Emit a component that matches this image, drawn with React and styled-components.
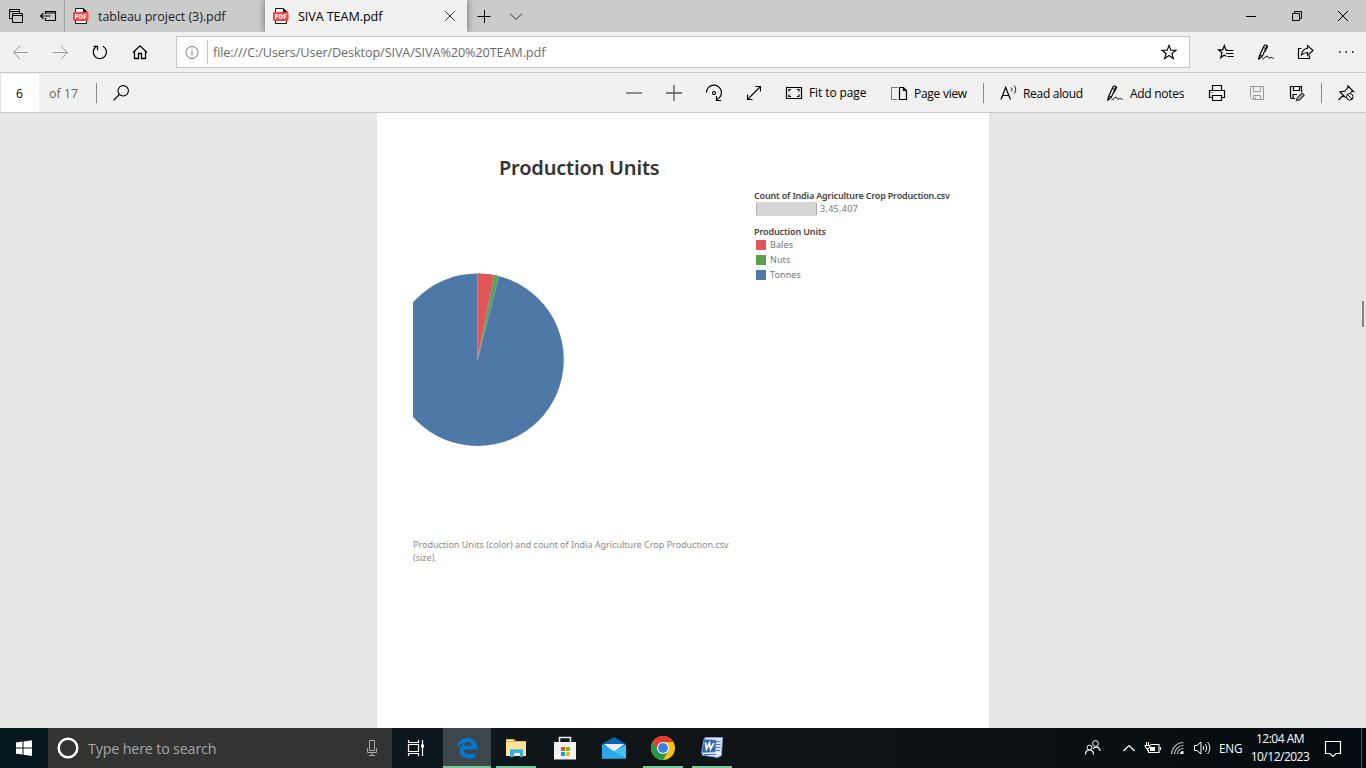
import React from "react";
import styled, { createGlobalStyle } from "styled-components";

const Global = createGlobalStyle`
  * { box-sizing: border-box; }
  body { margin: 0; overflow: hidden; background: #e6e6e6; }
`;

const Window = styled.div`
  width: 1366px;
  height: 768px;
  display: flex;
  flex-direction: column;
  font-family: "Open Sans", "Noto Sans", sans-serif;
  color: #000;
`;

const Icon = styled.svg`
  display: block;
  flex: none;
  width: ${(p) => p.$w || 20}px;
  height: ${(p) => p.$h || 20}px;
  fill: none;
  stroke: ${(p) => p.$color || "#000"};
  stroke-width: ${(p) => p.$stroke || 1};
`;

const Label = styled.span`
  flex: none;
  white-space: nowrap;
  font-size: ${(p) => p.$size || 12}px;
  letter-spacing: ${(p) => p.$track || 0}px;
  color: ${(p) => p.$color || "#000"};
  width: ${(p) => (p.$w ? `${p.$w}px` : "auto")};
  margin-left: ${(p) => p.$left || 0}px;
  padding-top: ${(p) => p.$drop || 0}px;
`;

const Slot = styled.div`
  flex: none;
  width: ${(p) => p.$w || 40}px;
  height: 100%;
  display: flex;
  align-items: center;
  justify-content: center;
`;

const Spacer = styled.div`
  flex: 1;
`;

const Rule = styled.div`
  flex: none;
  width: 1px;
  height: ${(p) => p.$h || 20}px;
  background: ${(p) => p.$color || "#999"};
`;

/* Tab strip */
const TabStrip = styled.div`
  height: 32px;
  flex: none;
  display: flex;
  background: #cbcbcb;
`;

const TabTools = styled.div`
  width: 65px;
  display: flex;
  align-items: center;
  gap: 12px;
  padding-left: 6px;
  border-right: 1px solid #a0a0a0;
`;

const Tab = styled.div`
  width: ${(p) => (p.$active ? 202 : 200)}px;
  display: flex;
  align-items: center;
  padding-left: 7px;
  gap: 8px;
  background: ${(p) => (p.$active ? "#f1f1f1" : "transparent")};
  box-shadow: ${(p) => (p.$active ? "0 0 7px rgba(0,0,0,.5)" : "none")};
  clip-path: ${(p) => (p.$active ? "inset(0 -10px 0 -10px)" : "none")};
`;

const NavBar = styled.div`
  height: 41px;
  flex: none;
  display: flex;
  align-items: center;
  background: #f1f1f1;
  border-bottom: 1px solid #cacaca;
`;

const Address = styled.div`
  width: 1014px;
  height: 32px;
  margin: 0 16px;
  display: flex;
  align-items: center;
  background: #fff;
  border: 1px solid #c6c6c6;
`;

const PdfBar = styled.div`
  height: 40px;
  flex: none;
  display: flex;
  align-items: center;
  background: #f1f1f1;
  border-bottom: 1px solid #cacaca;
`;

const PageBox = styled.div`
  width: 39px;
  height: 38px;
  margin-right: 10px;
  padding-left: 15px;
  display: flex;
  align-items: center;
  background: #fff;
  border-left: 1px solid #e2e2e2;
`;

const Tool = styled.div`
  width: ${(p) => p.$w}px;
  margin-left: ${(p) => p.$left || 0}px;
  flex: none;
  display: flex;
  align-items: center;
  gap: ${(p) => p.$gap || 5}px;
`;

/* Document */
const Viewer = styled.main`
  height: 615px;
  flex: none;
  display: flex;
  justify-content: space-between;
  background: #e6e6e6;
  padding-left: 377px;
`;

const Sheet = styled.article`
  width: 612px;
  display: flex;
  background: #fff;
  font-family: "Noto Sans", sans-serif;
`;

const ChartColumn = styled.section`
  width: 377px;
  padding: 42px 0 0 36px;
`;

const ChartTitle = styled.h1`
  margin: 0;
  height: 26px;
  padding-left: 86px;
  font: 600 20px/26px "Noto Sans", sans-serif;
  letter-spacing: -0.2px;
  color: #333;
  white-space: nowrap;
`;

const Pie = styled.svg`
  display: block;
  width: 160px;
  height: 180px;
  margin-top: 89px;
`;

const Caption = styled.p`
  margin: 88px 0 0;
  font-size: 9px;
  line-height: 13px;
  letter-spacing: 0;
  color: #8c8c8c;
  white-space: nowrap;
`;

const Legend = styled.aside`
  padding-top: 76px;
  font-size: 9px;
  color: #777;
  white-space: nowrap;
`;

const LegendTitle = styled.div`
  height: 12px;
  line-height: 13px;
  font-weight: 600;
  letter-spacing: ${(p) => p.$track || 0}px;
  color: #444;
`;

const SizeRow = styled.div`
  display: flex;
  align-items: center;
  height: 15px;
  margin-bottom: 9px;
  padding-left: 2px;
  gap: 3px;
  letter-spacing: 0.3px;
`;

const SizeBar = styled.div`
  width: 61px;
  height: 14px;
  background: #d6d6d6;
  border: solid #aaa;
  border-width: 0 1px;
  border-radius: 2px;
`;

const LegendRow = styled.div`
  height: 15px;
  display: flex;
  align-items: center;
  gap: 4px;
  padding-left: 2px;
  letter-spacing: 0.1px;
`;

const Swatch = styled.div`
  width: 10px;
  height: 10px;
  background: ${(p) => p.$color};
`;

const ScrollThumb = styled.div`
  width: 2px;
  height: 26px;
  margin: 188px 2px 0 0;
  background: #858585;
`;

/* Taskbar */
const Taskbar = styled.footer`
  height: 40px;
  flex: none;
  display: flex;
  align-items: center;
  background: linear-gradient(90deg, #07151c, #0b171c 30%, #101417 50%, #0c1012 75%, #020b10);
`;

const SearchBox = styled.div`
  width: 344px;
  height: 40px;
  display: flex;
  align-items: center;
  padding: 0 12px 0 8px;
  background: #333;
`;

const App49 = styled.div`
  width: 49px;
  height: 40px;
  flex: none;
  display: flex;
  flex-direction: column;
  align-items: center;
`;

const AppFace = styled.div`
  width: 48px;
  height: 38px;
  display: flex;
  align-items: center;
  justify-content: center;
  padding-top: 2px;
  background: ${(p) => (p.$active ? "#3d464a" : "transparent")};
`;

const Underline = styled.div`
  width: ${(p) => (p.$active ? 48 : 40)}px;
  height: 2px;
  background: ${(p) => (p.$open ? "#76c796" : "transparent")};
`;

const Clock = styled.div`
  width: 66px;
  display: flex;
  flex-direction: column;
  align-items: center;
  line-height: 18px;
  font-size: 12px;
  letter-spacing: -0.5px;
  color: #fff;
  white-space: nowrap;
`;

const PdfIcon = () => (
  <Icon $w={18} $h={18} viewBox="0 0 18 18">
    <path d="M3.5 5V1.5h8L14.500 4.500V16.500h-11V13" fill="#fff" stroke="#111" />
    <path d="M11 1v4h4.500z" fill="#111" stroke="none" />
    <rect x="1" y="5" width="15.500" height="9" rx="1" fill="#ff4343" stroke="none" />
    <path d="M3.600 12V7.600h2v2.200h-2M7.600 7.600v3.800h1.200l1.200-.9V8.500l-1.200-.9zM12.100 12V7.600h2.500M12.100 9.800h2" stroke="#fff" strokeWidth="1.200" />
  </Icon>
);

const InkIcon = () => (
  <Icon viewBox="0 0 20 20">
    <path d="M2.500 17.500l1.200-4.300L8 4c.8-1.700 3.200-1 2.600.9L6.300 14.200 2.500 17.500M3.700 13.200l2.600 1M7.200 5.500l2.600 1M10.500 3l1 1.500L9 9.500" strokeWidth="1.200" />
    <path d="M6.500 17c2-.2 3-3 4.600-2.800 1.200.2.500 1.800 1.800 2 1.300 0 1.600-1 2.700-.7.9.2.6 1.200 2 .7" />
  </Icon>
);

const SaveShape = () => (
  <path d="M3.500 3.500h13v13h-11l-2-2zM6.500 3.500v5h7v-5M6.500 16.500v-4h7v4M8.500 14v2.500" />
);

const EdgeIcon = () => (
  <Icon $w={22} $h={22} viewBox="0 0 22 22">
    <path
      fill="#0078d7"
      stroke="none"
      d="M1 10C1.7 4.5 5.5 1 11.2 1C17.7 1 21 5.6 21 10.3v2.2H7.4c.2 3.4 2.8 4.6 6 4.6 2.2 0 4.2-.6 6-1.6v4.4c-2 1.1-4.2 1.7-6.8 1.7C6.7 21.600 3.500 18 3.500 13.600c0-3.200 1.700-6 5-7.600C5.500 6.400 2.900 7.600 1 10zM7.500 9h8c0-2.400-1.200-3.900-3.800-3.900C9.300 5.100 7.900 6.800 7.500 9z"
    />
  </Icon>
);

const FolderIcon = () => (
  <Icon $w={24} $h={22} viewBox="0 0 24 22">
    <g stroke="none">
      <path d="M2 2h8l2 2h10v15H2z" fill="#e8b84a" />
      <path d="M2 5h20v14H2z" fill="#ffe294" />
      <path d="M3 3h6v1H3z" fill="#fff" />
      <path d="M6 12h13v8h-3v-4h-6v4H6z" fill="#35aee2" />
      <path d="M6 12h13v1H6z" fill="#63c5ed" />
      <path d="M10 16h6v3h-6z" fill="#fff6d8" />
    </g>
  </Icon>
);

const StoreIcon = () => (
  <Icon $w={24} $h={26} viewBox="0 0 24 26">
    <path d="M6.500 8V2.500h11V8" stroke="#eee" strokeWidth="1.500" />
    <path d="M1 7h22v17.500H1z" fill="#f2f2f2" stroke="none" />
    <g stroke="none">
      <path d="M8 12h4v4H8z" fill="#f25022" />
      <path d="M13 12h4v4h-4z" fill="#7fba00" />
      <path d="M8 17h4v4H8z" fill="#00a4ef" />
      <path d="M13 17h4v4h-4z" fill="#ffb900" />
    </g>
  </Icon>
);

const MailIcon = () => (
  <Icon $w={26} $h={24} viewBox="0 0 26 24">
    <g stroke="none">
      <path d="M1 8L13 1l12 7v14H1z" fill="#0b64b0" />
      <path d="M3 8h20L13 16z" fill="#eef1f5" />
      <path d="M1 8.500L13 15l12-6.500v14H1z" fill="#41c2f5" />
      <path d="M3 8h20l-10 7z" fill="#eef1f5" />
      <path d="M1 8.500l24 14H1z" fill="#29a8ea" />
    </g>
  </Icon>
);

const ChromeIcon = () => (
  <Icon $w={24} $h={24} viewBox="0 0 24 24">
    <g stroke="none">
      <circle cx="12" cy="12" r="12" fill="#fbc116" />
      <path d="M1.600 6A12 12 0 0 1 22.400 6H12L6.800 15z" fill="#e33b2e" />
      <path d="M1.600 6A12 12 0 0 0 12 24l5.200-9H6.800z" fill="#229a4a" />
      <circle cx="12" cy="12" r="6" fill="#fff" />
      <circle cx="12" cy="12" r="4.900" fill="#3a80ea" />
    </g>
  </Icon>
);

const WordIcon = () => (
  <Icon $w={24} $h={24} viewBox="0 0 24 24">
    <path d="M5 1.500h17.500l-1 18-4 2L2 19z" fill="#dfe8f7" stroke="#7c9cd0" />
    <path d="M16 5.500h4.500M16 8.500h4.500M15.500 11.500h5M15.500 14.500h4.500M4 18.500h12" stroke="#4c76bd" strokeWidth="1.200" />
    <path d="M4 3l12.500 1-1 12L1.500 17z" fill="#3666b3" stroke="#a9bfe3" strokeWidth=".7" />
    <path d="M5.500 6.500l1 6.500 3-6 1 6 3.500-6" stroke="#fff" strokeWidth="1.700" />
  </Icon>
);

const TaskApp = ({ active, open, children }) => (
  <App49>
    <AppFace $active={active}>{children}</AppFace>
    <Underline $active={active} $open={open} />
  </App49>
);

const legend = [
  ["Bales", "#e15759"],
  ["Nuts", "#59a14f"],
  ["Tonnes", "#4e79a7"],
];

export default function App() {
  return (
    <Window>
      <Global />
      <TabStrip>
        <TabTools>
          <Icon viewBox="0 0 20 20">
            <path d="M6 12.500H3.500v-9h10V7M3.500 5.500h10M6.500 7.500h10v9h-10zM6.500 9.500h10" />
          </Icon>
          <Icon viewBox="0 0 20 20">
            <path d="M7.500 8V5.500h10v9h-10V12M7 7h11M2.500 10h10M5.500 7l-3 3 3 3" strokeWidth="1.100" />
          </Icon>
        </TabTools>
        <Tab>
          <PdfIcon />
          <Label $size={12.5} $track={-0.05} $color="#222">tableau project (3).pdf</Label>
        </Tab>
        <Tab $active>
          <PdfIcon />
          <Label $size={12.6} $track={-0.08}>SIVA TEAM.pdf</Label>
          <Spacer />
          <Slot $w={34}>
            <Icon viewBox="0 0 20 20" $color="#333">
              <path d="M5.200 5.200l9.600 9.600M14.800 5.200l-9.600 9.600" />
            </Icon>
          </Slot>
        </Tab>
        <Slot $w={33}>
          <Icon viewBox="0 0 20 20">
            <path d="M3.500 10.500h13M10.500 4v13" />
          </Icon>
        </Slot>
        <Slot $w={32}>
          <Icon viewBox="0 0 20 20" $color="#333">
            <path d="M4 7.500l6 6 6-6" />
          </Icon>
        </Slot>
        <Spacer />
        <Slot $w={46}>
          <Icon viewBox="0 0 20 20"><path d="M5 10.500h10" /></Icon>
        </Slot>
        <Slot $w={46}>
          <Icon viewBox="0 0 20 20"><path d="M5.500 7.500h7v7h-7zM7.500 7V5.500h7v7H13" /></Icon>
        </Slot>
        <Slot $w={46}>
          <Icon viewBox="0 0 20 20"><path d="M5 5l10 10M15 5L5 15" /></Icon>
        </Slot>
      </TabStrip>

      <NavBar>
        <Slot>
          <Icon viewBox="0 0 20 20" $color="#999"><path d="M18 10.500H3.500M10 4l-6.500 6.500L10 17" /></Icon>
        </Slot>
        <Slot>
          <Icon viewBox="0 0 20 20" $color="#999"><path d="M3 10.500h14.500M11 4l6.500 6.500L11 17" /></Icon>
        </Slot>
        <Slot>
          <Icon viewBox="0 0 20 20">
            <path d="M12.800 4.200A6.600 6.600 0 1 1 6 4.800M3.500 4.300h4v4" strokeWidth="1.200" />
          </Icon>
        </Slot>
        <Slot>
          <Icon viewBox="0 0 20 20">
            <path d="M3 10.500l7-6.700 7 6.700M4.500 9.500v7h4v-5h3v5h4v-7" strokeWidth="1.300" />
          </Icon>
        </Slot>
        <Address>
          <Slot $w={30}>
            <Icon viewBox="0 0 20 20" $color="#777">
              <circle cx="10" cy="10.500" r="6" />
              <path d="M10 9.500v4M10 7v1.200" />
            </Icon>
          </Slot>
          <Rule $h={24} $color="#c8c8c8" />
          <Label $size={12.7} $track={-0.12} $color="#6b6b6b" $left={5}>
            file:///C:/Users/User/Desktop/SIVA/SIVA%20%20TEAM.pdf
          </Label>
          <Spacer />
          <Slot>
            <Icon viewBox="0 0 20 20">
              <path d="M10 3.300l1.800 5h5.200l-4.200 3.200 1.600 5.100L10 13.500l-4.400 3.100 1.600-5.100L3 8.300h5.200z" strokeWidth="1.100" />
            </Icon>
          </Slot>
        </Address>
        <Slot>
          <Icon viewBox="0 0 20 20">
            <path d="M11.500 7.800H9.800L8.300 3.500l-1.500 4.300H2.500L6 10.700l-1.300 5L8.300 13l2 1.500" strokeWidth="1.150" />
            <path d="M10.500 8.500h7M10 11.500h7.500M11.500 14.500h6" strokeWidth="1.200" />
          </Icon>
        </Slot>
        <Slot><InkIcon /></Slot>
        <Slot>
          <Icon viewBox="0 0 20 20">
            <path d="M5.500 6.500h-3v10h11v-3" strokeWidth="1.200" />
            <path d="M5.500 13c.4-4 2.300-6.300 6-6.500V3.500l5.500 5-5.500 5v-3c-2.800 0-4.400.7-6 2.500z" strokeWidth="1.100" />
          </Icon>
        </Slot>
        <Slot>
          <Icon viewBox="0 0 20 20">
            <path d="M3 10h1.500M9.500 10H11M16 10h1.500" strokeWidth="1.500" />
          </Icon>
        </Slot>
      </NavBar>

      <PdfBar>
        <PageBox><Label $size={12} $drop={1}>6</Label></PageBox>
        <Label $w={47} $size={12.4} $track={0} $drop={1} $color="#666">of 17</Label>
        <Rule $color="#888" />
        <Slot $w={48}>
          <Icon viewBox="0 0 20 20">
            <circle cx="12.200" cy="7.800" r="5.200" strokeWidth="1.100" />
            <path d="M8.300 11.500L2.500 17.300" strokeWidth="1.200" />
          </Icon>
        </Slot>
        <Spacer />
        <Slot>
          <Icon viewBox="0 0 20 20" $color="#666"><path d="M2 10h16" strokeWidth="1.400" /></Icon>
        </Slot>
        <Slot>
          <Icon viewBox="0 0 20 20" $color="#555"><path d="M2 10h16M10 2v16" strokeWidth="1.300" /></Icon>
        </Slot>
        <Slot>
          <Icon viewBox="0 0 20 20">
            <path d="M2.500 9.500a7.500 7.500 0 1 1 10.500 7M12.500 13v4.500H17" strokeWidth="1.200" />
            <circle cx="10" cy="10" r="1.500" strokeWidth="1.200" />
          </Icon>
        </Slot>
        <Slot>
          <Icon viewBox="0 0 20 20">
            <path d="M3.500 16.500l13-13M11.500 3.500h5v5M3.500 11.500v5h5" strokeWidth="1.100" />
          </Icon>
        </Slot>
        <Tool $w={105} $left={10}>
          <Icon viewBox="0 0 20 20">
            <path d="M2.500 4.500h15v11h-15zM5 8.500v-2h2M13 6.500h2v2M15 11.500v2h-2M7 13.500H5v-2" strokeWidth="1.200" />
          </Icon>
          <Label $size={12} $track={-0.1}>Fit to page</Label>
        </Tool>
        <Tool $w={94}>
          <Icon viewBox="0 0 20 20">
            <path d="M10.500 4.500h4l3 3v9h-7zM14.500 4.500v3h3" strokeWidth="1.200" />
            <path d="M8.500 4.500h-6v12h6" strokeDasharray="1 1" />
          </Icon>
          <Label $size={12} $track={-0.27} $drop={1}>Page view</Label>
        </Tool>
        <Rule $color="#888" />
        <Tool $w={106} $gap={4} $left={15}>
          <Icon viewBox="0 0 20 20">
            <path d="M2 16.500L6.700 4.500l4.800 12M3.500 12.500h6.500" strokeWidth="1.200" />
            <path d="M12 4.500c1.300 1 1.300 3 0 4M15 2.500c2.200 2.300 2.200 6 0 8" />
          </Icon>
          <Label $size={12} $track={-0.3} $drop={1}>Read aloud</Label>
        </Tool>
        <Tool $w={92}>
          <InkIcon />
          <Label $size={12} $track={-0.28} $drop={1}>Add notes</Label>
        </Tool>
        <Slot>
          <Icon viewBox="0 0 20 20">
            <path d="M5.500 7.500v-5h9v5M5.500 14.500h-3v-7h15v7h-3M5.500 12.500h9v5h-9zM4.500 9.500h1" strokeWidth="1.200" />
          </Icon>
        </Slot>
        <Slot><Icon viewBox="0 0 20 20" $color="#999"><SaveShape /></Icon></Slot>
        <Slot>
          <Icon viewBox="0 0 20 20">
            <path d="M8 15.500H4.500l-1-1v-11h11V9M6.500 3.500v4h6v-4M6 15.500v-4h4" strokeWidth="1.200" />
            <path d="M9.500 17.500l.7-2.700L15 10l2.200 2.200-4.700 4.700z" stroke="#333" fill="#aaa" strokeWidth="1.100" />
          </Icon>
        </Slot>
        <Slot $w={9}><Rule $color="#888" /></Slot>
        <Slot>
          <Icon viewBox="0 0 20 20">
            <path d="M2.500 17l5-5M3.500 8.500l6 6M4 9C6 8 7 8.300 8.500 8.500L12 4.500l-.5-1.500M11.500 2.500l6 6-1.500-.3-1.500 1.500" strokeWidth="1.100" />
            <circle cx="13.800" cy="13.800" r="3.300" fill="#f1f1f1" />
            <path d="M11.500 11.500l4.600 4.600" />
          </Icon>
        </Slot>
      </PdfBar>

      <Viewer>
        <Sheet>
          <ChartColumn>
            <ChartTitle>Production Units</ChartTitle>
            <Pie viewBox="0 0 160 180">
              <circle cx="64.500" cy="89.700" r="86.300" fill="#4e79a7" />
              <path d="M64.500 89.700V3.400A86.300 86.300 0 0 1 81.300 5z" fill="#e15759" />
              <path d="M64.500 89.700L81.300 5A86.300 86.300 0 0 1 85.800 6.100z" fill="#59a14f" />
              <path d="M64.500 89.700V3.400M64.500 89.700L81.300 5M64.500 89.700L85.800 6.100" stroke="#b8c3d3" strokeWidth=".4" />
            </Pie>
            <Caption>
              Production Units (color) and count of India Agriculture Crop Production.csv
              <br />
              (size).
            </Caption>
          </ChartColumn>
          <Legend>
            <LegendTitle $track={-0.18}>Count of India Agriculture Crop Production.csv</LegendTitle>
            <SizeRow><SizeBar />3,45,407</SizeRow>
            <LegendTitle $track={-0.12}>Production Units</LegendTitle>
            {legend.map(([name, color]) => (
              <LegendRow key={name}><Swatch $color={color} />{name}</LegendRow>
            ))}
          </Legend>
        </Sheet>
        <ScrollThumb />
      </Viewer>

      <Taskbar>
        <Slot $w={48}>
          <Icon viewBox="0 0 20 20">
            <path d="M2 4.500l6.500-.9v6H2zM9.500 3.400L18 2.200v7.400H9.500zM2 10.600h6.500v6L2 15.700zM9.500 10.600H18V18l-8.500-1.200z" fill="#fff" stroke="none" />
          </Icon>
        </Slot>
        <SearchBox>
          <Icon $w={24} $h={24} viewBox="0 0 24 24">
            <circle cx="12" cy="12" r="9.300" stroke="#fff" strokeWidth="2.400" />
          </Icon>
          <Label $size={14.3} $track={-0.17} $color="#a6a6a6" $left={8}>Type here to search</Label>
          <Spacer />
          <Icon $w={16} $h={20} viewBox="0 0 16 20" $color="#aaa">
            <path d="M5.500 2.500h5v10h-5zM3.500 10v4.500h9V10M8 14.500v3M5 17.500h6" />
          </Icon>
        </SearchBox>
        <Slot $w={48}>
          <Icon viewBox="0 0 20 20" $color="#fff">
            <path d="M2.500 2v2.500h10V2M2.500 6.500h10v7h-10zM2.500 18v-2.500h10V18M16.500 2v16" strokeWidth="1.200" />
            <path d="M15 6.500h3v3h-3z" fill="#fff" stroke="none" />
          </Icon>
        </Slot>
        <Slot $w={2} />
        <TaskApp active open><EdgeIcon /></TaskApp>
        <TaskApp open><FolderIcon /></TaskApp>
        <TaskApp><StoreIcon /></TaskApp>
        <TaskApp><MailIcon /></TaskApp>
        <TaskApp open><ChromeIcon /></TaskApp>
        <TaskApp open><WordIcon /></TaskApp>
        <Spacer />
        <Slot>
          <Icon viewBox="0 0 20 20" $color="#fff">
            <circle cx="6.500" cy="9.500" r="2.400" /><circle cx="12.500" cy="5.500" r="2.900" />
            <path d="M2.500 16.500c0-3 1.500-4.500 4-4.500s4 1.500 4 4.500M10 11c1-2 6.500-3.500 7 2" strokeWidth="1.200" />
          </Icon>
        </Slot>
        <Slot $w={32}>
          <Icon viewBox="0 0 20 20" $color="#fff"><path d="M4.500 13l5.500-5.500 5.500 5.500" strokeWidth="1.200" /></Icon>
        </Slot>
        <Slot $w={16}>
          <Icon viewBox="0 0 20 20" $color="#fff">
            <path d="M7.500 6.500h8.500v8H5.500V12M17.500 9v3M3.500 4v3M5.500 4v3M2 7.500h5V9L5.500 10.500h-2L2.500 9zM4.500 10.500V13" strokeWidth="1.100" />
            <path d="M7 9h5v4H7z" fill="#fff" stroke="none" />
          </Icon>
        </Slot>
        <Slot $w={33}>
          <Icon viewBox="0 0 20 20" $color="#bbb">
            <path d="M3.500 16C4 9.500 9 4.500 15.500 4.500M6.500 16c.4-4.800 4-8.500 9-8.500M9.500 16c.3-3.200 2.500-5.500 6-5.500" strokeWidth="1.200" />
            <path d="M12 16c0-2 1.200-3 3.500-3v3z" fill="#fff" stroke="none" />
          </Icon>
        </Slot>
        <Slot $w={16}>
          <Icon viewBox="0 0 20 20" $color="#fff">
            <path d="M2.500 7.500H5l4-3.500v12l-4-3.500H2.500zM11 8c1 1.200 1 2.800 0 4M13 6c2.200 2.300 2.200 5.700 0 8M15.500 4c3 3.500 3 8.500 0 12" />
          </Icon>
        </Slot>
        <Slot $w={9} />
        <Label $w={28} $size={11.7} $track={-0.2} $color="#fff">ENG</Label>
        <Clock><span>12:04 AM</span><span>10/12/2023</span></Clock>
        <Slot $w={40}>
          <Icon viewBox="0 0 20 20" $color="#fff">
            <path d="M2.500 3.500h15v12H13l-3 3-3-3H2.500z" strokeWidth="1.200" />
          </Icon>
        </Slot>
        <Slot $w={8} />
        <Rule $h={40} $color="#4c5559" />
        <Slot $w={4} />
      </Taskbar>
    </Window>
  );
}
